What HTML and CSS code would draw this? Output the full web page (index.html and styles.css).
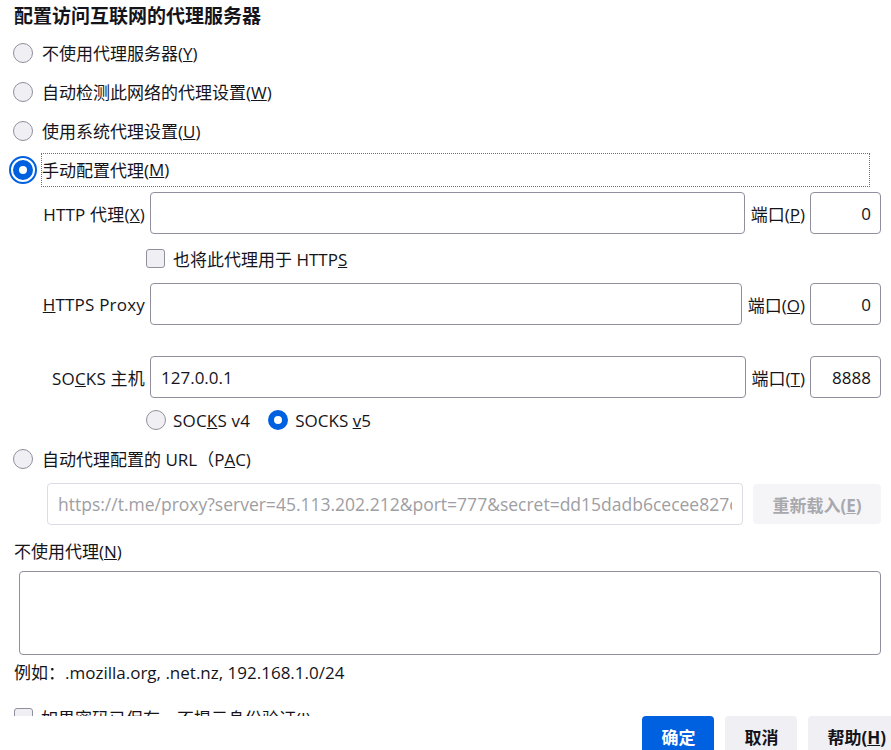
FILE: index.html
```html
<!DOCTYPE html>
<html lang="zh-CN">
<head>
<meta charset="utf-8">
<title>连接设置</title>
<link rel="stylesheet" href="styles.css">
</head>
<body>
<div class="content">
  <h1 class="title">配置访问互联网的代理服务器</h1>
  <div class="radio-row"><span class="radio"></span><span class="lbl">不使用代理服务器(<u>Y</u>)</span></div>
  <div class="radio-row"><span class="radio"></span><span class="lbl">自动检测此网络的代理设置(<u>W</u>)</span></div>
  <div class="radio-row"><span class="radio"></span><span class="lbl">使用系统代理设置(<u>U</u>)</span></div>
  <div class="radio-row"><span class="radio checked focused"></span><span class="lbl focus-box">手动配置代理(<u>M</u>)</span></div>

  <div class="manual">
    <div class="field-row">
      <span class="field-label">HTTP 代理(<u>X</u>)</span>
      <input class="text-input" type="text" value="">
      <span class="port-label">端口(<u>P</u>)</span>
      <input class="text-input port-input" type="text" value="0">
    </div>
    <div class="check-row">
      <span class="checkbox"></span><span class="lbl">也将此代理用于 HTTP<u>S</u></span>
    </div>
    <div class="field-row">
      <span class="field-label"><u>H</u>TTPS Proxy</span>
      <input class="text-input" type="text" value="">
      <span class="port-label">端口(<u>O</u>)</span>
      <input class="text-input port-input" type="text" value="0">
    </div>
    <div class="field-row socks-row">
      <span class="field-label">SO<u>C</u>KS 主机</span>
      <input class="text-input" type="text" value="127.0.0.1">
      <span class="port-label">端口(<u>T</u>)</span>
      <input class="text-input port-input" type="text" value="8888">
    </div>
    <div class="socks-versions">
      <span class="radio small"></span><span class="lbl v4">SOC<u>K</u>S v4</span>
      <span class="radio small checked"></span><span class="lbl">SOCKS <u>v</u>5</span>
    </div>
  </div>

  <div class="radio-row pac-row"><span class="radio"></span><span class="lbl">自动代理配置的 URL（P<u>A</u>C)</span></div>
  <div class="url-row">
    <input class="text-input url-input" type="text" disabled value="https://t.me/proxy?server=45.113.202.212&amp;port=777&amp;secret=dd15dadb6cecee827c0f1c2b3a4d5e6f">
    <button class="btn btn-disabled" type="button">重新载入(<u>E</u>)</button>
  </div>

  <div class="section-label">不使用代理(<u>N</u>)</div>
  <textarea class="no-proxy"></textarea>
  <div class="example">例如：.mozilla.org, .net.nz, 192.168.1.0/24</div>
  <div class="check-row bottom-check">
    <span class="checkbox"></span><span class="lbl">如果密码已保存，不提示身份验证(<u>I</u>)</span>
  </div>
</div>
<div class="footer">
  <button class="btn btn-primary" type="button">确定</button>
  <button class="btn" type="button">取消</button>
  <button class="btn" type="button">帮助(<u>H</u>)</button>
</div>
</body>
</html>
```
FILE: styles.css
```css
* { box-sizing: border-box; }
html, body { margin: 0; padding: 0; }
body {
  width: 891px;
  height: 750px;
  overflow: hidden;
  background: #ffffff;
  color: #15141a;
  font-family: "Open Sans", "Noto Sans CJK SC", sans-serif;
  font-size: 17px;
}
.content {
  height: 716px;
  overflow: hidden;
  padding: 0 10px 0 13px;
}
.title {
  margin: 0;
  padding-left: 1px;
  height: 33px;
  line-height: 33px;
  font-size: 19px;
  font-weight: 700;
}
.radio-row {
  display: flex;
  align-items: center;
  height: 39px;
}
.radio {
  flex: none;
  width: 20px;
  height: 20px;
  border-radius: 50%;
  border: 1px solid #8f8f9d;
  background: #f0f0f4;
  margin-right: 8px;
}
.radio.checked {
  border: 6px solid #0061e0;
  background: #ffffff;
}
.radio.focused {
  outline: 2px solid #0061e0;
  outline-offset: 2px;
}
.lbl { padding-left: 1px; white-space: nowrap; }
.focus-box {
  flex: 1;
  height: 34px;
  display: flex;
  align-items: center;
  padding-left: 0;
  border: 1px dotted #6f6f6f;
  margin-right: 11px;
}
.manual { padding-top: 3px; }
.field-row {
  display: flex;
  align-items: center;
  height: 42px;
}
.field-label {
  flex: none;
  width: 132px;
  text-align: right;
  margin-right: 5px;
  white-space: nowrap;
  letter-spacing: 0.2px;
}
.text-input {
  flex: 1;
  min-width: 0;
  height: 42px;
  border: 1px solid #8f8f9d;
  border-radius: 4px;
  padding: 0 10px;
  font: inherit;
  color: inherit;
  background: #ffffff;
  outline: none;
}
.port-label { flex: none; margin: 0 5px 0 6px; white-space: nowrap; }
.port-input {
  flex: none;
  width: 71px;
  text-align: right;
  padding-right: 9px;
}
.check-row {
  display: flex;
  align-items: center;
  height: 49px;
  padding-left: 133px;
}
.checkbox {
  flex: none;
  width: 19px;
  height: 19px;
  border: 1px solid #8f8f9d;
  border-radius: 3px;
  background: #f0f0f4;
  margin-right: 7px;
}
.socks-row { margin-top: 31px; }
.socks-versions {
  display: flex;
  align-items: center;
  height: 44px;
  padding-left: 133px;
}
.radio.small { margin-right: 6px; }
.v4 { margin-right: 18px; letter-spacing: 0.2px; }
.pac-row { height: 33px; }
.url-row {
  display: flex;
  align-items: center;
  gap: 10px;
  margin-top: 8px;
  padding-left: 34px;
  height: 42px;
}
.url-input {
  border-color: #dcdce2;
  color: #9e9ea3;
  font-size: 17.5px;
}
.btn {
  flex: none;
  height: 40px;
  min-width: 72px;
  padding: 0 19px;
  border: none;
  border-radius: 4px;
  background: #f0f0f4;
  color: #15141a;
  font: inherit;
  font-weight: 700;
}
.btn-disabled {
  width: 128px;
  background: #f5f5f7;
  color: #a8a8ad;
}
.btn-primary {
  background: #0061e0;
  color: #ffffff;
}
.section-label {
  margin-top: 15px;
  padding-left: 1px;
  line-height: 24px;
}
.no-proxy {
  display: block;
  margin: 7px 0 0 6px;
  width: calc(100% - 6px);
  height: 84px;
  border: 1px solid #8f8f9d;
  border-radius: 4px;
  resize: none;
  font: inherit;
}
.example {
  margin-top: 6px;
  padding-left: 1px;
  line-height: 24px;
}
.bottom-check {
  height: 40px;
  margin-top: 12px;
  padding-left: 1px;
}
.footer {
  display: flex;
  justify-content: flex-end;
  gap: 11px;
  margin-right: -14px;
}
```
